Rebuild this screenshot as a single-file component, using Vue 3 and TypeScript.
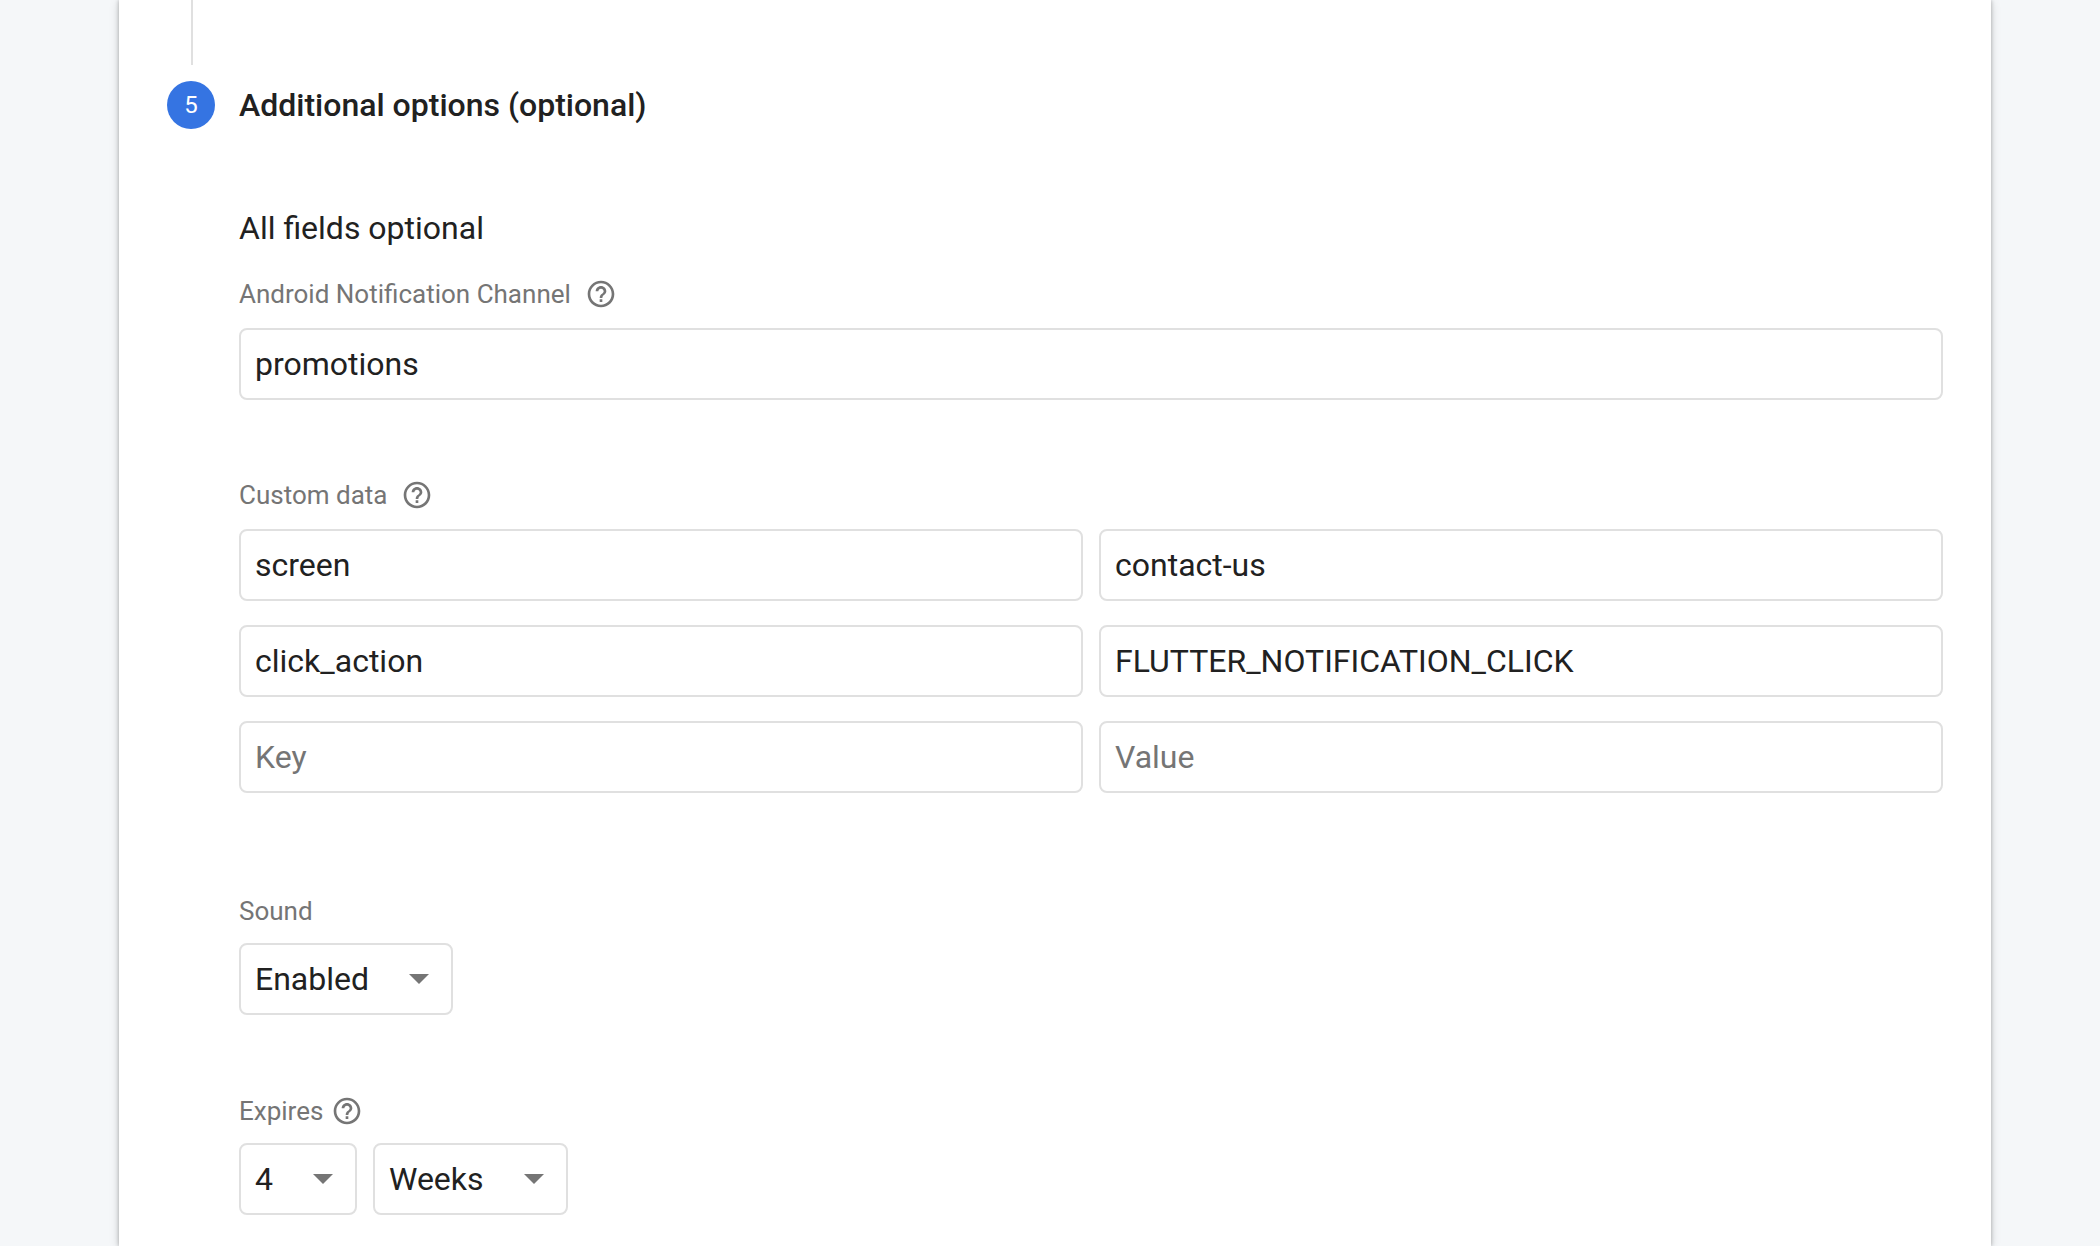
<script setup lang="ts">
import { ref } from 'vue'

interface DataPair {
  key: string
  value: string
}

const channel = ref('promotions')
const customData = ref<DataPair[]>([
  { key: 'screen', value: 'contact-us' },
  { key: 'click_action', value: 'FLUTTER_NOTIFICATION_CLICK' },
  { key: '', value: '' },
])
const sound = ref('Enabled')
const amount = ref(4)
const unit = ref('Weeks')

const helpPath =
  'M11 18h2v-2h-2v2zm1-16C6.48 2 2 6.48 2 12s4.48 10 10 10 10-4.48 10-10S17.52 2 12 2zm0 18c-4.41 0-8-3.59-8-8s3.59-8 8-8 8 3.59 8 8-3.59 8-8 8zm0-14c-2.21 0-4 1.79-4 4h2c0-1.1.9-2 2-2s2 .9 2 2c0 2-3 1.75-3 5h2c0-2.25 3-2.5 3-5 0-2.21-1.790-4-4-4z'
</script>

<template>
  <main class="page">
    <section class="card">
      <div class="connector"></div>
      <header class="step">
        <span class="badge">5</span>
        <h2 class="title">Additional options (optional)</h2>
      </header>

      <form class="body" @submit.prevent>
        <p class="intro">All fields optional</p>

        <div class="field">
          <div class="label-row">
            <label for="channel">Android Notification Channel</label>
            <button type="button" class="help" aria-label="Help: Android Notification Channel">
              <svg viewBox="0 0 24 24"><path :d="helpPath" /></svg>
            </button>
          </div>
          <input id="channel" v-model="channel" class="box" type="text" />
        </div>

        <div class="field custom">
          <div class="label-row">
            <label for="key-0">Custom data</label>
            <button type="button" class="help" aria-label="Help: Custom data">
              <svg viewBox="0 0 24 24"><path :d="helpPath" /></svg>
            </button>
          </div>
          <div class="pairs">
            <div v-for="(pair, i) in customData" :key="i" class="pair">
              <input :id="`key-${i}`" v-model="pair.key" class="box" type="text" placeholder="Key" aria-label="Key" />
              <input v-model="pair.value" class="box" type="text" placeholder="Value" aria-label="Value" />
            </div>
          </div>
        </div>

        <div class="field tight">
          <div class="label-row">
            <label for="sound">Sound</label>
          </div>
          <div class="selects">
            <div class="select">
              <select id="sound" v-model="sound" class="box">
                <option>Enabled</option>
                <option>Disabled</option>
              </select>
              <svg class="arrow" viewBox="0 0 20 10"><path d="M0 0h20L10 10z" /></svg>
            </div>
          </div>
        </div>

        <div class="field tight">
          <div class="label-row">
            <label for="amount">Expires</label>
            <button type="button" class="help" aria-label="Help: Expires">
              <svg viewBox="0 0 24 24"><path :d="helpPath" /></svg>
            </button>
          </div>
          <div class="selects">
            <div class="select">
              <select id="amount" v-model="amount" class="box">
                <option v-for="n in 4" :key="n" :value="n">{{ n }}</option>
              </select>
              <svg class="arrow" viewBox="0 0 20 10"><path d="M0 0h20L10 10z" /></svg>
            </div>
            <div class="select">
              <select v-model="unit" class="box" aria-label="Expiry unit">
                <option>Minutes</option>
                <option>Hours</option>
                <option>Days</option>
                <option>Weeks</option>
              </select>
              <svg class="arrow" viewBox="0 0 20 10"><path d="M0 0h20L10 10z" /></svg>
            </div>
          </div>
        </div>
      </form>
    </section>
  </main>
</template>

<style>
body {
  background: #f5f7f9;
}
</style>

<style scoped>
.page {
  display: flex;
  min-height: 100vh;
  box-sizing: border-box;
  padding: 0 109px 0 119px;
  font-family: Roboto, "Liberation Sans", sans-serif;
  font-size: 32px;
  color: #212121;
}

.card {
  flex: 1;
  min-width: 0;
  padding: 0 48px 24px;
  background: #fff;
  box-shadow: 0 2px 10px rgba(0, 0, 0, 0.14), 0 0 4px rgba(0, 0, 0, 0.28);
}

.connector {
  width: 2px;
  height: 65px;
  margin: 0 0 16px 24px;
  background: #e0e0e0;
}

.step {
  display: flex;
  align-items: center;
  gap: 24px;
}

.badge {
  flex: none;
  width: 48px;
  border-radius: 50%;
  background: #3574e2;
  color: #fff;
  font-size: 24px;
  line-height: 48px;
  text-align: center;
}

.title {
  margin: 0;
  font-size: 32px;
  font-weight: 500;
  line-height: 48px;
}

.body {
  padding: 75px 0 0 72px;
}

.intro {
  margin: 0 0 26px;
  line-height: 48px;
}

.field {
  display: flex;
  flex-direction: column;
  gap: 18px;
  margin-bottom: 79px;
}

.custom {
  margin-bottom: 102px;
}

.tight {
  gap: 16px;
  margin-bottom: 80px;
}

.tight:last-child {
  margin-bottom: 0;
}

.label-row {
  display: flex;
  align-items: center;
  gap: 14px;
  height: 32px;
  color: #757575;
  font-size: 26px;
  line-height: 32px;
}

.tight .label-row {
  gap: 8px;
}

.help {
  width: 32px;
  height: 32px;
  padding: 0;
  border: 0;
  background: none;
}

.help svg {
  display: block;
  fill: #757575;
}

.box {
  box-sizing: border-box;
  height: 72px;
  margin: 0;
  padding: 0 14px;
  border: 2px solid #e0e0e0;
  border-radius: 8px;
  outline: 0;
  background: #fff;
  color: #212121;
  font: inherit;
}

.box::placeholder {
  color: #757575;
  opacity: 1;
}

.pairs {
  display: flex;
  flex-direction: column;
  gap: 24px;
}

.pair {
  display: flex;
  gap: 16px;
}

.pair .box {
  flex: 1;
  min-width: 0;
}

.selects {
  display: flex;
  gap: 16px;
}

.select {
  display: grid;
  align-items: center;
}

.select .box {
  grid-area: 1 / 1;
  appearance: none;
  field-sizing: content;
  padding-right: 82px;
}

.arrow {
  grid-area: 1 / 1;
  justify-self: end;
  width: 20px;
  height: 10px;
  margin-right: 24px;
  fill: #757575;
  pointer-events: none;
}
</style>
